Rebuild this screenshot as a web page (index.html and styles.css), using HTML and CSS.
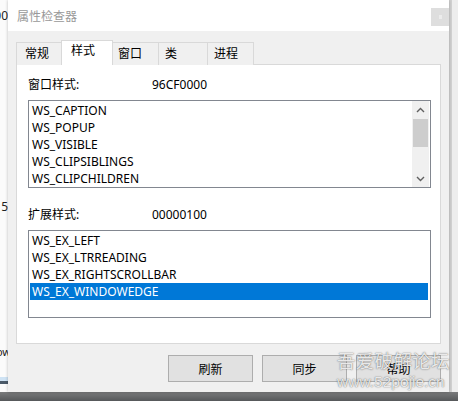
FILE: index.html
```html
<!DOCTYPE html>
<html lang="zh">
<head>
  <meta charset="UTF-8" />
  <title>属性检查器</title>
  <link rel="stylesheet" href="styles.css">
</head>
<body>
  <div class="desk">
    <div class="behind-left">
      <div class="frag frag-top">100</div>
      <div class="frag frag-mid">5</div>
      <div class="frag frag-low">Show</div>
      <div class="taskline"></div>
    </div>

    <div class="dialog">
      <div class="titlebar">
        <span class="title">属性检查器</span>
        <span class="close-btn"><span class="close-mark"></span></span>
      </div>

      <div class="dialog-body">
        <div class="tabs">
          <div class="tab tab-general">常规</div>
          <div class="tab tab-style active">样式</div>
          <div class="tab tab-window">窗口</div>
          <div class="tab tab-class">类</div>
          <div class="tab tab-process">进程</div>
        </div>

        <div class="panel">
          <div class="field-row">
            <span class="field-label">窗口样式:</span>
            <span class="field-value">96CF0000</span>
          </div>
          <div class="listbox">
            <ul class="list-items">
              <li>WS_CAPTION</li>
              <li>WS_POPUP</li>
              <li>WS_VISIBLE</li>
              <li>WS_CLIPSIBLINGS</li>
              <li>WS_CLIPCHILDREN</li>
            </ul>
            <div class="scrollbar">
              <svg class="arrow" width="9" height="6" viewBox="0 0 9 6"><path d="M1 5 L4.5 1.5 L8 5" fill="none" stroke="#606060" stroke-width="1.4"/></svg>
              <div class="track">
                <div class="thumb"></div>
              </div>
              <svg class="arrow" width="9" height="6" viewBox="0 0 9 6"><path d="M1 1 L4.5 4.5 L8 1" fill="none" stroke="#606060" stroke-width="1.4"/></svg>
            </div>
          </div>

          <div class="field-row field-row-ex">
            <span class="field-label">扩展样式:</span>
            <span class="field-value">00000100</span>
          </div>
          <div class="listbox">
            <ul class="list-items list-full">
              <li>WS_EX_LEFT</li>
              <li>WS_EX_LTRREADING</li>
              <li>WS_EX_RIGHTSCROLLBAR</li>
              <li class="selected">WS_EX_WINDOWEDGE</li>
            </ul>
          </div>
        </div>

        <div class="buttons">
          <button class="btn">刷新</button>
          <button class="btn">同步</button>
          <button class="btn">帮助</button>
        </div>
      </div>

      <div class="watermark">
        <div class="wm-name">吾爱破解论坛</div>
        <div class="wm-url">www.52pojie.cn</div>
      </div>
    </div>

    <div class="behind-right"></div>
  </div>
  <div class="shadow-strip"></div>
</body>
</html>
```

FILE: styles.css
```css
body {
  margin: 0;
  padding: 0;
  width: 458px;
  height: 401px;
  overflow: hidden;
  background-color: #5f6163;
  font-family: "Noto Sans", "Noto Sans CJK SC", sans-serif;
  font-size: 12px;
  color: #000;
}

.desk {
  display: flex;
  height: 392px;
}

/* window peeking out behind the dialog */
.behind-left {
  width: 8px;
  background-color: #fbfbfb;
  overflow: hidden;
}

.frag {
  width: 30px;
  margin-left: -22px;
  text-align: right;
  font-size: 12px;
  color: #222;
  line-height: 14px;
}

.frag-top {
  margin-top: 9px;
}

.frag-mid {
  margin-top: 177px;
  width: 24px;
  margin-left: -16px;
}

.frag-low {
  margin-top: 131px;
  width: 33px;
  margin-left: -22px;
  font-size: 11px;
}

.taskline {
  margin-top: 18px;
  height: 4px;
  background-color: #cfe3f4;
  border-bottom: 3px solid #4b5a69;
}

.behind-right {
  width: 6px;
  background-color: #ededed;
  border-left: 3px solid #d2d2d2;
}

.dialog {
  width: 441px;
  display: flex;
  flex-direction: column;
  background-color: #f0f0f0;
  position: relative;
  box-shadow: 0 0 3px rgba(0, 0, 0, 0.25);
}

.titlebar {
  height: 31px;
  background-color: #fff;
  display: flex;
  justify-content: space-between;
  align-items: flex-start;
}

.title {
  margin-left: 9px;
  margin-top: 7px;
  color: #999;
  font-size: 12px;
}

.close-btn {
  width: 18px;
  height: 18px;
  margin-top: 8px;
  background-color: #dedede;
  display: flex;
  justify-content: center;
  align-items: center;
}

.close-mark {
  width: 3px;
  height: 4px;
  background-color: #ececec;
}

.dialog-body {
  flex: 1;
  padding: 9px 8px 0 8px;
  display: flex;
  flex-direction: column;
}

.tabs {
  display: flex;
  align-items: flex-end;
  height: 25px;
  margin-bottom: -1px;
  position: relative;
  z-index: 1;
}

.tab {
  box-sizing: border-box;
  height: 23px;
  border: 1px solid #d9d9d9;
  border-left: none;
  border-bottom: none;
  background-color: #f0f0f0;
  padding-left: 8px;
  line-height: 22px;
}

.tab-general {
  width: 46px;
  border-left: 1px solid #d9d9d9;
}

.tab-style {
  width: 52px;
}

.tab-window {
  width: 46px;
  padding-left: 5px;
}

.tab-class {
  width: 49px;
  padding-left: 6px;
}

.tab-process {
  width: 46px;
  padding-left: 6px;
}

.tab.active {
  height: 25px;
  background-color: #fff;
  padding-left: 9px;
  line-height: 20px;
  border-left: 1px solid #d9d9d9;
  margin-left: -1px;
}

.panel {
  box-sizing: border-box;
  height: 280px;
  background-color: #fff;
  border: 1px solid #d9d9d9;
  padding: 12px 9px 0 11px;
}

.field-row {
  display: flex;
  height: 16px;
  line-height: 16px;
  margin-bottom: 7px;
}

.field-row-ex {
  margin-top: 19px;
}

.field-label {
  width: 124px;
}

.listbox {
  box-sizing: border-box;
  height: 88px;
  border: 1px solid #828790;
  display: flex;
  background-color: #fff;
}

.list-items {
  flex: 1;
  list-style: none;
  margin: 0;
  padding: 1px 0 0 0;
}

.list-items li {
  height: 17px;
  line-height: 17px;
  padding-left: 3px;
  white-space: nowrap;
}

.list-full {
  padding-right: 2px;
}

.list-items li.selected {
  background-color: #0078d7;
  color: #fff;
  margin-left: 1px;
  padding-left: 2px;
}

.scrollbar {
  width: 17px;
  margin-right: 1px;
  display: flex;
  flex-direction: column;
  align-items: center;
  background-color: #f0f0f0;
  padding: 6px 0 5px 0;
}

.track {
  flex: 1;
  width: 100%;
  padding-top: 6px;
  box-sizing: border-box;
}

.thumb {
  height: 28px;
  margin: 0 1px;
  background-color: #cdcdcd;
}

.buttons {
  display: flex;
  justify-content: flex-end;
  gap: 9px;
  margin-top: 11px;
}

.btn {
  width: 85px;
  height: 27px;
  background-color: #e1e1e1;
  border: 1px solid #adadad;
  font-family: "Noto Sans CJK SC", sans-serif;
  font-size: 12px;
  color: #000;
  padding: 0;
}

.watermark {
  position: absolute;
  left: 329px;
  top: 351px;
  white-space: nowrap;
  color: rgba(255, 255, 255, 0.85);
  text-shadow: 0 0 1px rgba(60, 60, 60, 0.7), 0 0 2px rgba(60, 60, 60, 0.35);
  line-height: 1;
}

.wm-name {
  font-family: "Noto Sans CJK SC", sans-serif;
  font-size: 18.5px;
  letter-spacing: 0.3px;
}

.wm-url {
  font-family: "Liberation Sans", sans-serif;
  font-size: 15.5px;
  margin-top: 4px;
}

.shadow-strip {
  height: 9px;
  background: linear-gradient(#7a7b7c, #56585a);
}
```
